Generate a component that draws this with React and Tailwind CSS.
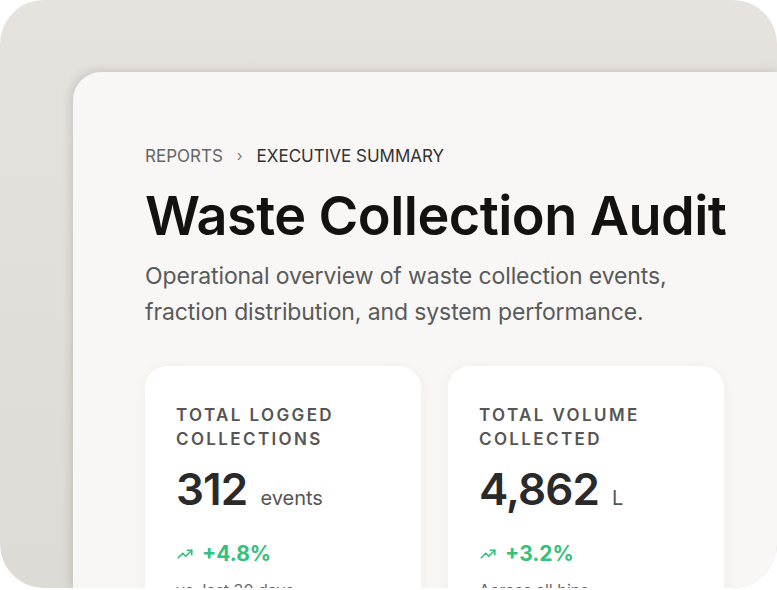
import React from "react";

const TrendIcon = () => (
  <svg width="18" height="18" viewBox="0 0 24 24" fill="none" stroke="currentColor" strokeWidth="2.2" strokeLinecap="round" strokeLinejoin="round">
    <polyline points="3 17 9 11 13 15 21 7" />
    <polyline points="15 7 21 7 21 13" />
  </svg>
);

const StatCard = ({ label, value, unit, delta, note }) => (
  <div className="w-[276px] h-[260px] rounded-[22px] bg-white shadow-[0_2px_14px_rgba(60,50,40,0.05)] px-[31px] pt-[37px]">
    <div className="text-[17px] leading-[24px] font-semibold tracking-[0.14em] text-[#555]">{label}</div>
    <div className="mt-[10px] flex items-baseline gap-[13px]">
      <span className="text-[44px] leading-[56px] font-semibold tracking-[-0.02em] text-[#2a2a2a]">{value}</span>
      <span className="text-[20px] text-[#555]">{unit}</span>
    </div>
    <div className="mt-[21px] flex items-center gap-[8px] text-[#33c17c]">
      <TrendIcon />
      <span className="text-[21px] font-bold">{delta}</span>
    </div>
    <div className="mt-[8px] text-[16px] text-[#666]">{note}</div>
  </div>
);

export default function App() {
  return (
    <div className="w-[777px] h-[590px] bg-white overflow-hidden" style={{ fontFamily: "Inter, 'Noto Sans', sans-serif" }}>
      <div className="h-[588px] rounded-[44px] overflow-hidden bg-gradient-to-b from-[#e6e3df] to-[#dedad5] pl-[73px] pt-[72px]">
        <div className="h-full rounded-tl-[28px] bg-[#f8f7f5] shadow-[0_-2px_10px_rgba(80,70,60,0.12),-4px_0_10px_rgba(80,70,60,0.08)] pl-[72px] pt-[72px]">
          <div className="flex items-center gap-[14px] text-[17px] leading-[24px]">
            <span className="text-[#666]">REPORTS</span>
            <span className="text-[#777] text-[15px]">›</span>
            <span className="text-[#333]">EXECUTIVE SUMMARY</span>
          </div>
          <h1 className="mt-[14px] text-[54px] leading-[68px] font-semibold tracking-[-0.01em] text-[#121212]">Waste Collection Audit</h1>
          <p className="mt-[8px] text-[23px] leading-[36px] tracking-[-0.005em] text-[#5a5a5a]">
            Operational overview of waste collection events,<br />fraction distribution, and system performance.
          </p>
          <div className="mt-[36px] flex gap-[27px]">
            <StatCard label={<>TOTAL LOGGED<br />COLLECTIONS</>} value="312" unit="events" delta="+4.8%" note="vs. last 30 days" />
            <StatCard label={<>TOTAL VOLUME<br />COLLECTED</>} value="4,862" unit="L" delta="+3.2%" note="Across all bins" />
          </div>
        </div>
      </div>
    </div>
  );
}
